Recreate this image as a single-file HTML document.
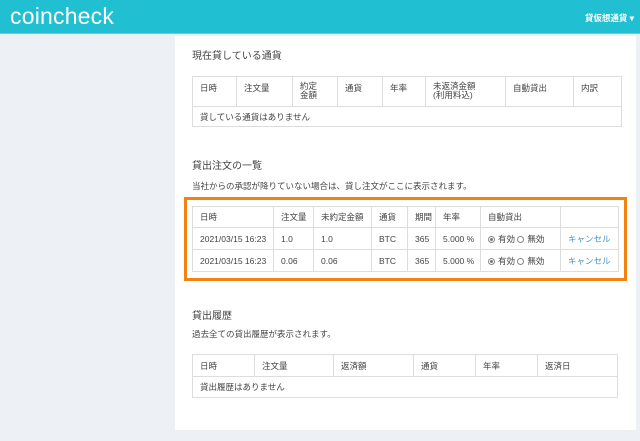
<!DOCTYPE html>
<html><head><meta charset="utf-8"><style>
*{margin:0;padding:0;box-sizing:border-box}
body{width:640px;height:441px;background:#edf0f4;font-family:"Liberation Sans","Noto Sans CJK JP",sans-serif;color:#333;font-size:9px;position:relative;overflow:hidden}
.hd{position:absolute;left:0;top:0;width:640px;height:34px;background:#20c0d2;border-bottom:1px solid #5fd3e0}
.logo{position:absolute;left:10px;top:3px;color:#fff;font-size:23px;letter-spacing:0.2px}
.menu{position:absolute;right:6px;top:12px;color:#fff;font-size:8.5px;font-weight:bold}
.panel{position:absolute;left:175px;top:36px;width:461px;height:394px;background:#fff}
.t{position:absolute;font-size:10px;color:#444}
.s{position:absolute;font-size:8.5px;color:#444}
table{position:absolute;border-collapse:collapse;font-size:8.5px;color:#444}
td{border:1px solid #ddd;padding:0 0 0 7px;vertical-align:middle}
.ob{position:absolute;left:184px;top:197px;width:443px;height:84px;border:3px solid #f5820f}
.b{color:#4a90c8}
.r{display:inline-block;width:7px;height:7px;border:1px solid #888;border-radius:50%;vertical-align:-1px;margin-right:3px;position:relative}
.r.on::after{content:"";position:absolute;left:1px;top:1px;width:3px;height:3px;border-radius:50%;background:#777}
</style></head><body>
<div class="hd"><div class="logo">coincheck</div><div class="menu">貸仮想通貨 ▾</div></div>
<div class="panel"></div>
<div class="t" style="left:192px;top:47px">現在貸している通貨</div>
<table style="left:192px;top:76px;width:430px">
<tr style="height:30px"><td style="width:44px;vertical-align:top;padding-top:5px">日時</td><td style="width:56px;vertical-align:top;padding-top:5px">注文量</td><td style="width:45px;vertical-align:top;padding-top:5px;line-height:9px">約定<br>金額</td><td style="width:45px;vertical-align:top;padding-top:5px">通貨</td><td style="width:43px;vertical-align:top;padding-top:5px">年率</td><td style="width:80px;vertical-align:top;padding-top:5px;line-height:9px">未返済金額<br>(利用料込)</td><td style="width:68px;vertical-align:top;padding-top:5px">自動貸出</td><td style="vertical-align:top;padding-top:5px">内訳</td></tr>
<tr style="height:20px"><td colspan="8">貸している通貨はありません</td></tr>
</table>
<div class="t" style="left:192px;top:157px">貸出注文の一覧</div>
<div class="s" style="left:192px;top:180px">当社からの承認が降りていない場合は、貸し注文がここに表示されます。</div>
<div class="ob"></div>
<table style="left:192px;top:206px;width:427px">
<tr style="height:21px"><td style="width:81px">日時</td><td style="width:40px">注文量</td><td style="width:58px">未約定金額</td><td style="width:36px">通貨</td><td style="width:28px">期間</td><td style="width:45px">年率</td><td style="width:80px">自動貸出</td><td></td></tr>
<tr style="height:22px"><td>2021/03/15 16:23</td><td>1.0</td><td>1.0</td><td>BTC</td><td>365</td><td>5.000 %</td><td><span class="r on"></span>有効 <span class="r"></span>無効</td><td class="b">キャンセル</td></tr>
<tr style="height:22px"><td>2021/03/15 16:23</td><td>0.06</td><td>0.06</td><td>BTC</td><td>365</td><td>5.000 %</td><td><span class="r on"></span>有効 <span class="r"></span>無効</td><td class="b">キャンセル</td></tr>
</table>
<div class="t" style="left:192px;top:307px">貸出履歴</div>
<div class="s" style="left:192px;top:328px">過去全ての貸出履歴が表示されます。</div>
<table style="left:192px;top:354px;width:426px">
<tr style="height:22px"><td style="width:62px">日時</td><td style="width:79px">注文量</td><td style="width:80px">返済額</td><td style="width:62px">通貨</td><td style="width:62px">年率</td><td>返済日</td></tr>
<tr style="height:21px"><td colspan="6">貸出履歴はありません</td></tr>
</table>
</body></html>
